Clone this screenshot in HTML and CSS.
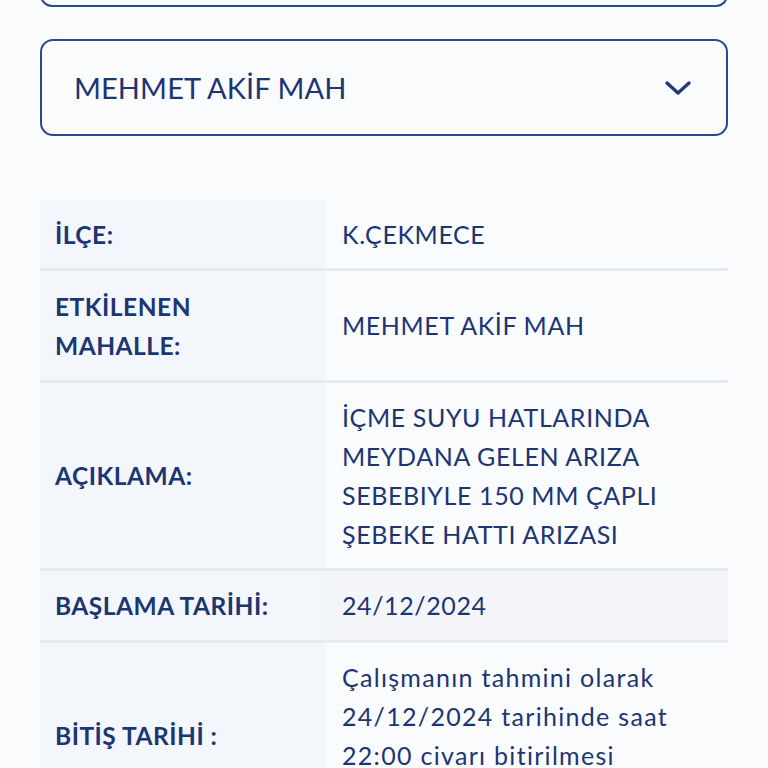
FILE: index.html
```html
<!DOCTYPE html>
<html lang="tr">
<head>
<meta charset="utf-8">
<link rel="stylesheet" href="styles.css">
</head>
<body>
<div class="page">
  <div class="topbox"></div>
  <div class="select">
    <span class="select-text">MEHMET AKİF MAH</span>
    <svg class="chev" width="28" height="18" viewBox="0 0 28 18"><path d="M3 4 L14 14 L25 4" fill="none" stroke="#1f3a78" stroke-width="3.4" stroke-linecap="round" stroke-linejoin="round"/></svg>
  </div>
  <div class="table">
    <div class="row r1">
      <div class="lab">İLÇE:</div>
      <div class="val">K.ÇEKMECE</div>
    </div>
    <div class="row r2">
      <div class="lab">ETKİLENEN<br>MAHALLE:</div>
      <div class="val">MEHMET AKİF MAH</div>
    </div>
    <div class="row r3">
      <div class="lab">AÇIKLAMA:</div>
      <div class="val">İÇME SUYU HATLARINDA<br>MEYDANA GELEN ARIZA<br>SEBEBIYLE 150 MM ÇAPLI<br>ŞEBEKE HATTI ARIZASI</div>
    </div>
    <div class="row r4 gray">
      <div class="lab">BAŞLAMA TARİHİ:</div>
      <div class="val">24/12/2024</div>
    </div>
    <div class="row r5">
      <div class="lab">BİTİŞ TARİHİ :</div>
      <div class="val mixed">Çalışmanın tahmini olarak<br>24/12/2024 tarihinde saat<br>22:00 civarı bitirilmesi<br>planlanmaktadır.</div>
    </div>
  </div>
</div>
</body>
</html>
```
FILE: styles.css
```css
html, body {
  margin: 0;
  padding: 0;
  background: #f9fbfd;
  font-family: "Lato", "Noto Sans", sans-serif;
  color: #1c3573;
  overflow: hidden;
  height: 768px;
}
.page {
  padding: 0 40px;
}
.topbox {
  height: 5px;
  margin-top: -20px;
  padding-top: 20px;
  border: 2px solid #2a4a8c;
  border-top: none;
  border-radius: 0 0 12px 12px;
}
.select {
  margin-top: 32px;
  height: 93px;
  border: 2px solid #2a4a8c;
  border-radius: 13px;
  display: flex;
  align-items: center;
  justify-content: space-between;
  padding: 0 34px 0 32px;
}
.select-text {
  font-size: 29px;
  letter-spacing: 0.1px;
}
.chev { display: block; }
.table {
  margin-top: 64px;
}
.row {
  display: grid;
  grid-template-columns: 285px 1fr;
  border-bottom: 3px solid #e7eaef;
}
.lab {
  background: #f3f6fa;
  padding: 0 10px 0 15px;
  font-weight: 700;
  font-size: 24.5px;
  letter-spacing: 0.5px;
  line-height: 39px;
  display: flex;
  align-items: center;
}
.val {
  padding: 0 10px 0 17px;
  font-size: 25px;
  letter-spacing: 0.6px;
  line-height: 39px;
  display: flex;
  align-items: center;
  white-space: nowrap;
}
.val.mixed {
  letter-spacing: 1.3px;
}
.gray .val { background: #f4f5f8; }
.r1 { height: 68px; }
.r2 { height: 109px; }
.r3 { height: 185px; }
.r4 { height: 69px; }
.r5 { height: 185px; }
```
